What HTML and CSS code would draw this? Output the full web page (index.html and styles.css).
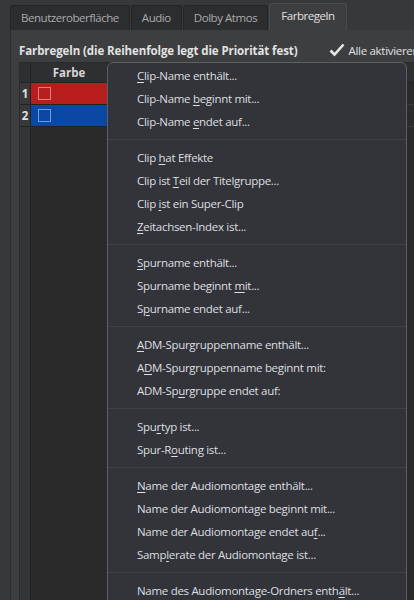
FILE: index.html
```html
<!DOCTYPE html>
<html lang="de">
<head>
<meta charset="utf-8">
<title>Farbregeln</title>
<link rel="stylesheet" href="styles.css">
</head>
<body>
<div class="window">
  <div class="tabs">
    <div class="tab">Benutzeroberfläche</div>
    <div class="tab">Audio</div>
    <div class="tab">Dolby Atmos</div>
    <div class="tab active">Farbregeln</div>
  </div>
  <div class="panel">
    <div class="headline">
      <span class="title">Farbregeln (die Reihenfolge legt die Priorität fest)</span>
      <span class="enable-all">
        <svg class="check" width="16" height="14" viewBox="0 0 16 14"><path d="M1.5 7.5 L5.5 11.5 L14.5 1.5" fill="none" stroke="#e6e6e6" stroke-width="2.6" stroke-linejoin="miter"/></svg>
        Alle aktivieren
      </span>
    </div>
    <div class="table">
      <div class="col-num">
        <div class="cell-head"></div>
        <div class="cell-num">1</div>
        <div class="cell-num">2</div>
        <div class="col-fill"></div>
      </div>
      <div class="col-color">
        <div class="cell-head">Farbe</div>
        <div class="cell-color red"><span class="swatch"></span></div>
        <div class="cell-color blue"><span class="swatch"></span></div>
        <div class="col-fill"></div>
      </div>
      <div class="col-rest">
        <div class="cell-head"></div>
        <div class="cell-rest"></div>
        <div class="cell-rest"></div>
        <div class="col-fill"></div>
      </div>
    </div>
  </div>

  <div class="menu">
    <div class="item"><u>C</u>lip-Name enthält...</div>
    <div class="item">Clip-Name <u>b</u>eginnt mit...</div>
    <div class="item">Clip-Name <u>e</u>ndet auf...</div>
    <div class="sep"></div>
    <div class="item">Clip <u>h</u>at Effekte</div>
    <div class="item">Clip ist <u>T</u>eil der Titelgruppe...</div>
    <div class="item">Clip <u>i</u>st ein Super-Clip</div>
    <div class="item"><u>Z</u>eitachsen-Index ist...</div>
    <div class="sep"></div>
    <div class="item"><u>S</u>purname enthält...</div>
    <div class="item">Spurname beginnt <u>m</u>it...</div>
    <div class="item">S<u>p</u>urname endet auf...</div>
    <div class="sep"></div>
    <div class="item"><u>A</u>DM-Spurgruppenname enthält...</div>
    <div class="item">A<u>D</u>M-Spurgruppenname beginnt mit:</div>
    <div class="item">ADM-Sp<u>u</u>rgruppe endet auf:</div>
    <div class="sep"></div>
    <div class="item">Spu<u>r</u>typ ist...</div>
    <div class="item">Spur-R<u>o</u>uting ist...</div>
    <div class="sep"></div>
    <div class="item"><u>N</u>ame der Audiomontage enthält...</div>
    <div class="item">Name der Audiomonta<u>g</u>e beginnt mit...</div>
    <div class="item">Name der Audiomontage endet au<u>f</u>...</div>
    <div class="item">Samp<u>l</u>erate der Audiomontage ist...</div>
    <div class="sep"></div>
    <div class="item">Name des Audiomontage-Ordners enth<u>ä</u>lt...</div>
  </div>
</div>
</body>
</html>
```

FILE: styles.css
```css
html, body {
  margin: 0;
  padding: 0;
}
body {
  background: #36383a;
  font-family: "Open Sans", "Noto Sans", sans-serif;
  font-size: 11.5px;
  letter-spacing: -0.3px;
  color: #dcdcdc;
  overflow: hidden;
}
.window {
  position: relative;
  width: 414px;
  height: 600px;
  overflow: hidden;
}
.tabs {
  display: flex;
  align-items: flex-end;
  height: 30px;
  padding-left: 10px;
  box-sizing: border-box;
}
.tab {
  height: 25px;
  box-sizing: border-box;
  padding: 0 10px;
  margin-right: 1px;
  background: #2c2d2f;
  border: 1px solid #252627;
  border-bottom: none;
  border-radius: 3px 3px 0 0;
  color: #a9abad;
  line-height: 24px;
  font-size: 11.5px;
  letter-spacing: -0.45px;
  white-space: nowrap;
}
.tab.active {
  height: 27px;
  background: #3d3e40;
  border-color: #4a4b4d;
  color: #e0e0e0;
  padding: 0 11px;
  line-height: 24px;
}
.panel {
  margin-left: 10px;
  height: 570px;
  background: #3d3e40;
  border-left: 1px solid #2b2c2e;
  padding: 9px 0 0 8px;
  box-sizing: border-box;
}
.headline {
  display: flex;
  align-items: center;
  height: 22px;
  white-space: nowrap;
}
.title {
  font-weight: 700;
  color: #e2e2e2;
  font-size: 11.5px;
  letter-spacing: -0.1px;
}
.enable-all {
  margin-left: 32px;
  display: flex;
  align-items: center;
  gap: 3px;
  color: #e0e0e0;
}
.check {
  display: block;
}
.table {
  margin-top: 1px;
  display: flex;
  height: 600px;
  border-top: 1px solid #2a2a2a;
  border-left: 1px solid #2a2a2a;
}
.col-num {
  width: 10px;
  display: flex;
  flex-direction: column;
  border-right: 1px solid #222;
  background: #343536;
}
.col-color {
  width: 76px;
  display: flex;
  flex-direction: column;
  border-right: 1px solid #222;
  background: #2a2a2a;
}
.col-rest {
  flex: 1;
  display: flex;
  flex-direction: column;
  background: #2a2a2a;
}
.cell-head {
  height: 20px;
  box-sizing: border-box;
  background: #2e2f30;
  border-bottom: 1px solid #232323;
  text-align: center;
  font-weight: 700;
  color: #d6d6d6;
  line-height: 19px;
  letter-spacing: 0;
}
.cell-num {
  height: 22px;
  box-sizing: border-box;
  border-bottom: 1px solid #232323;
  background: #383838;
  font-weight: 700;
  color: #e0e0e0;
  line-height: 22px;
  text-align: center;
  letter-spacing: 0;
}
.col-fill {
  flex: 1;
}
.col-num .col-fill {
  background: #343536;
}
.cell-color {
  height: 22px;
  box-sizing: border-box;
  border-bottom: 1px solid #232323;
  display: flex;
  align-items: center;
  padding-left: 7px;
}
.cell-color.red {
  background: #b81e1e;
}
.cell-color.blue {
  background: #0b48a4;
}
.swatch {
  display: block;
  width: 11px;
  height: 11px;
  border: 1px solid rgba(255, 255, 255, 0.45);
}
.cell-rest {
  height: 22px;
  box-sizing: border-box;
  border-bottom: 1px solid #3a3a3a;
}
.menu {
  position: absolute;
  left: 107px;
  top: 62px;
  width: 300px;
  height: 560px;
  box-sizing: border-box;
  background: #323439;
  border: 1px solid #5d5f63;
  border-radius: 6px;
  padding-top: 1px;
}
.item {
  height: 23px;
  line-height: 23px;
  padding-left: 29px;
  white-space: nowrap;
  color: #dedfe0;
}
.item u {
  text-decoration: underline;
  text-underline-offset: 2px;
}
.sep {
  height: 1px;
  margin: 6px 0;
  background: #3f4146;
}
```
